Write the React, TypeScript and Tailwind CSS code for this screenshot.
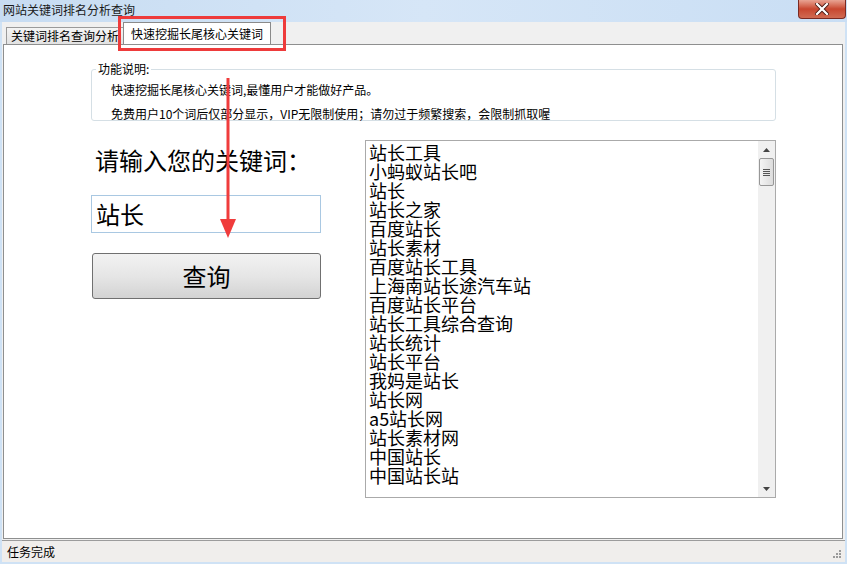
const KEYWORDS = [
  '站长工具',
  '小蚂蚁站长吧',
  '站长',
  '站长之家',
  '百度站长',
  '站长素材',
  '百度站长工具',
  '上海南站长途汽车站',
  '百度站长平台',
  '站长工具综合查询',
  '站长统计',
  '站长平台',
  '我妈是站长',
  '站长网',
  'a5站长网',
  '站长素材网',
  '中国站长',
  '中国站长站',
];

const cjk = { fontFamily: '"Noto Sans CJK SC", "Noto Sans", sans-serif' };

export default function App() {
  return (
    <div
      className="relative flex h-[564px] w-[847px] flex-col overflow-hidden bg-[#cfe2f5] text-black"
      style={cjk}
    >
      {/* title bar */}
      <div className="relative flex h-[22px] shrink-0 items-start bg-gradient-to-r from-[#c7dcf2] via-[#d6e6f7] to-[#c9def4] pl-[3px]">
        <span className="mt-[1px] text-[12px] leading-[18px] text-[#1a1a1a]">网站关键词排名分析查询</span>
        <div className="absolute right-[1px] top-0 flex h-[19px] w-[48px] items-center justify-center rounded-b-[4px] border border-t-0 border-[#7a2a22] bg-gradient-to-b from-[#e8a393] via-[#c8462f] to-[#d06a52]">
          <svg width="14" height="12" viewBox="0 0 14 12">
            <path d="M2 1 L12 11 M12 1 L2 11" stroke="#4a1a14" strokeWidth="4" strokeLinecap="square" />
            <path d="M2 1 L12 11 M12 1 L2 11" stroke="#ffffff" strokeWidth="2.2" strokeLinecap="square" />
          </svg>
        </div>
      </div>

      {/* window client */}
      <div className="mx-[2px] flex flex-1 flex-col bg-[#f0f0f0]">
        {/* tabs */}
        <div className="flex h-[22px] shrink-0 items-end pl-[4px]">
          <div className="flex h-[17px] items-center border border-b-0 border-[#9a9a9a] bg-gradient-to-b from-[#f4f4f4] to-[#e2e2e2] px-[4px] text-[12px] leading-none">
            关键词排名查询分析
          </div>
          <div className="-ml-[1px] flex h-[22px] items-center border border-b-0 border-[#8a8a8a] bg-white px-[7px] text-[12px] leading-none">
            快速挖掘长尾核心关键词
          </div>
        </div>

        {/* tab panel */}
        <div className="ml-[1px] mr-[2px] flex-1 border border-[#8e8f8f] bg-white">
          {/* description group */}
          <div className="relative ml-[87px] mt-[24px] h-[52px] w-[685px] rounded-[3px] border border-[#d5dfe5]">
            <span className="absolute -top-[8px] left-[4px] bg-white px-[2px] text-[12px] leading-[14px]">功能说明:</span>
            <div className="pl-[19px] pt-[8px] text-[12px] leading-[24px]">
              <div>快速挖掘长尾核心关键词,最懂用户才能做好产品。</div>
              <div>免费用户10个词后仅部分显示，VIP无限制使用；请勿过于频繁搜索，会限制抓取喔</div>
            </div>
          </div>

          <div className="ml-[87px] mt-[19px] flex">
            {/* left column */}
            <div className="flex w-[230px] flex-col">
              <div className="mt-[3px] pl-[4px] text-[24px] leading-[34px]">请输入您的关键词：</div>
              <div className="mt-[18px] flex h-[38px] items-center border border-[#a9c8e2] pl-[4px] text-[24px]">站长</div>
              <button
                type="button"
                className="mt-[20px] ml-[1px] flex h-[46px] w-[229px] items-center justify-center rounded-[3px] border border-[#707070] bg-gradient-to-b from-[#f2f2f2] via-[#e6e6e6] to-[#d3d3d3] text-[24px]"
              >
                查询
              </button>
            </div>

            {/* keyword list */}
            <div className="ml-[44px] flex h-[358px] w-[411px] border border-[#aaaaaa] bg-white">
              <ul className="flex-1 pl-[3px] pt-[2px] text-[18px] leading-[19px]">
                {KEYWORDS.map((k) => (
                  <li key={k}>{k}</li>
                ))}
              </ul>
              <div className="flex w-[17px] flex-col bg-[#f0f0f0]">
                <div className="flex h-[17px] items-center justify-center">
                  <svg width="7" height="4" viewBox="0 0 7 4"><path d="M0 4 L3.5 0 L7 4 Z" fill="#444" /></svg>
                </div>
                <div className="mx-[1px] flex h-[28px] items-center justify-center rounded-[2px] border border-[#979797] bg-gradient-to-r from-[#f4f4f4] to-[#dcdcdc]">
                  <div className="flex flex-col gap-[1px]">
                    <div className="h-[1px] w-[7px] bg-[#555]" />
                    <div className="h-[1px] w-[7px] bg-[#555]" />
                    <div className="h-[1px] w-[7px] bg-[#555]" />
                    <div className="h-[1px] w-[7px] bg-[#555]" />
                  </div>
                </div>
                <div className="flex-1" />
                <div className="flex h-[17px] items-center justify-center">
                  <svg width="7" height="4" viewBox="0 0 7 4"><path d="M0 0 L3.5 4 L7 0 Z" fill="#444" /></svg>
                </div>
              </div>
            </div>
          </div>
        </div>

        {/* status bar */}
        <div className="relative mt-[1px] flex h-[22px] shrink-0 items-center border-t border-[#9c9c9c] bg-[#f0eeec] pl-[5px] text-[12px]">
          任务完成
          <svg className="absolute bottom-[3px] right-[3px]" width="10" height="10" viewBox="0 0 10 10" fill="#9a9a9a">
            <rect x="7" y="1" width="2" height="2" />
            <rect x="4" y="4" width="2" height="2" />
            <rect x="7" y="4" width="2" height="2" />
            <rect x="1" y="7" width="2" height="2" />
            <rect x="4" y="7" width="2" height="2" />
            <rect x="7" y="7" width="2" height="2" />
          </svg>
        </div>
      </div>
      <div className="h-[2px] shrink-0" />

      {/* annotation: red box around the tab */}
      <div className="pointer-events-none absolute left-[118px] top-[16px] h-[35px] w-[168px] border-[3px] border-[#ee3b3b]" />
      {/* annotation: red arrow */}
      <svg className="pointer-events-none absolute left-[218px] top-[78px]" width="20" height="164" viewBox="0 0 20 164">
        <rect x="8.5" y="0" width="3" height="144" fill="#f03c3c" />
        <path d="M2 141 L18 141 L10 160 Z" fill="#f03c3c" />
      </svg>
    </div>
  );
}
